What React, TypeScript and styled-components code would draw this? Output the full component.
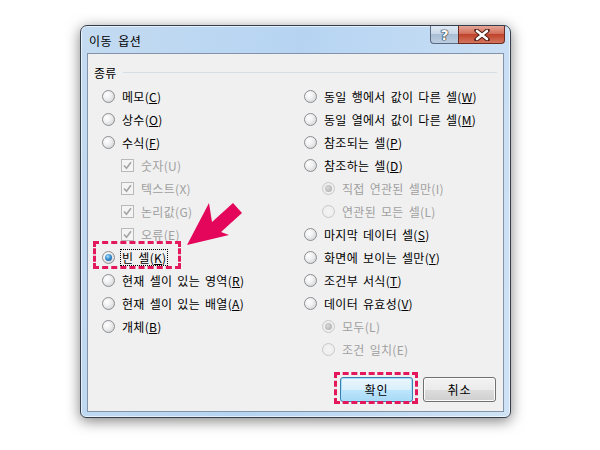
import React from 'react';
import styled, { createGlobalStyle, css } from 'styled-components';

const GlobalStyle = createGlobalStyle`
  html, body {
    margin: 0;
    padding: 0;
    background: #ffffff;
  }
  body {
    font-family: "Noto Sans CJK KR", "Noto Sans", sans-serif;
    font-size: 12px;
    color: #000000;
  }
`;

const Page = styled.div`
  position: relative;
  width: 600px;
  height: 450px;
  box-sizing: border-box;
  padding: 25px 0 0 80px;
  overflow: hidden;
`;

const Window = styled.div`
  width: 431px;
  height: 393px;
  box-sizing: border-box;
  border: 1px solid #343e4c;
  border-radius: 7px 7px 6px 6px;
  background: linear-gradient(100deg, #c4dbf1 0%, #b6d4f2 45%, #cfe2f5 100%);
  box-shadow: 0 3px 14px rgba(0, 0, 0, 0.5), inset 0 0 0 1px rgba(255, 255, 255, 0.6);
  display: flex;
  flex-direction: column;
`;

const TitleBar = styled.div`
  height: 27px;
  display: flex;
  align-items: flex-start;
  justify-content: space-between;
  padding: 0 5px 0 8px;
`;

const TitleText = styled.div`
  font-size: 12px;
  line-height: 16px;
  margin-top: 7px;
  letter-spacing: 0.5px;
  word-spacing: 3px;
`;

const CaptionButtons = styled.div`
  display: flex;
`;

const CaptionBtn = styled.div<{ kind: 'help' | 'close' }>`
  height: 18px;
  box-sizing: border-box;
  display: flex;
  align-items: center;
  justify-content: center;
  border: 1px solid #5a6a80;
  border-top: none;
  ${({ kind }) =>
    kind === 'help'
      ? css`
          width: 28px;
          border-radius: 0 0 0 4px;
          border-right: none;
          background: linear-gradient(to bottom, #dfe9f4 0%, #c9d8e8 45%, #a9bdd3 50%, #bccde0 100%);
        `
      : css`
          width: 47px;
          border-radius: 0 0 4px 0;
          border-color: #6a2a22;
          background: linear-gradient(to bottom, #e6a697 0%, #d26f5a 45%, #c0432b 50%, #d3755e 100%);
        `}
`;

const HelpGlyph = styled.span`
  font-family: "DejaVu Sans", sans-serif;
  font-weight: bold;
  font-size: 14px;
  line-height: 14px;
  color: #ffffff;
  text-shadow: 0 0 1px #233040, 0 0 1px #233040, 0 0 1px #233040, 0 0 1px #233040;
`;

const Content = styled.div`
  flex: 1;
  margin: 0 6px 5px 6px;
  border: 1px solid #8393a8;
  background: #f0f0f0;
  display: flex;
  flex-direction: column;
`;

const GroupHeader = styled.div`
  display: flex;
  align-items: center;
  gap: 6px;
  margin: 10px 6px 0 6px;
  height: 16px;
  letter-spacing: 0.3px;
`;

const GroupLine = styled.div`
  flex: 1;
  height: 1px;
  background: #d5dfe5;
`;

const Columns = styled.div`
  display: grid;
  grid-template-columns: 202px 1fr;
  margin-top: 5px;
  padding-left: 14px;
`;

const Column = styled.div`
  display: flex;
  flex-direction: column;
`;

const Row = styled.div<{ indent?: number; disabled?: boolean }>`
  height: 23px;
  display: flex;
  align-items: center;
  gap: 5px;
  padding-left: ${({ indent }) => indent || 0}px;
  color: ${({ disabled }) => (disabled ? '#a0a0a0' : '#000000')};
  white-space: nowrap;
  line-height: 15px;
  letter-spacing: 0.3px;
  word-spacing: 2px;
`;

const Radio = styled.span<{ checked?: boolean; disabled?: boolean }>`
  width: 13px;
  height: 13px;
  box-sizing: border-box;
  border-radius: 50%;
  flex: none;
  display: flex;
  align-items: center;
  justify-content: center;
  border: 1px solid ${({ disabled }) => (disabled ? '#c8c8c8' : '#8c8e92')};
  background: ${({ disabled }) =>
    disabled
      ? 'radial-gradient(circle at 50% 50%, #f4f4f4 0%, #ebebeb 100%)'
      : 'radial-gradient(circle at 35% 35%, #ffffff 0%, #f0f0f0 40%, #c9cbce 100%)'};
  &::after {
    content: '';
    display: ${({ checked }) => (checked ? 'block' : 'none')};
    width: 7px;
    height: 7px;
    border-radius: 50%;
    background: ${({ disabled }) =>
      disabled
        ? 'radial-gradient(circle at 40% 40%, #d8d8d8 0%, #a8a8a8 100%)'
        : 'radial-gradient(circle at 40% 35%, #a9e2ff 0%, #3b8fd0 45%, #134f88 100%)'};
  }
`;

const CheckBox = styled.span`
  width: 13px;
  height: 13px;
  box-sizing: border-box;
  flex: none;
  border: 1px solid #b9b9b9;
  background: #f4f4f4;
  display: flex;
  align-items: center;
  justify-content: center;
`;

const Label = styled.span<{ focused?: boolean }>`
  padding: 0 1px;
  border: 1px solid transparent;
  ${({ focused }) =>
    focused &&
    css`
      border: 1px dotted #000000;
    `}
`;

const ButtonRow = styled.div`
  margin-top: auto;
  display: flex;
  justify-content: flex-end;
  gap: 10px;
  padding: 0 7px 9px 0;
`;

const Button = styled.div<{ primary?: boolean }>`
  width: 73px;
  height: 25px;
  box-sizing: border-box;
  border-radius: 3px;
  display: flex;
  align-items: center;
  justify-content: center;
  letter-spacing: 1px;
  border: 1px solid ${({ primary }) => (primary ? '#3c7fb1' : '#707070')};
  background: ${({ primary }) =>
    primary
      ? 'linear-gradient(to bottom, #eaf6fd 0%, #d9f0fc 50%, #bee6fd 50%, #a7d9f5 100%)'
      : 'linear-gradient(to bottom, #f2f2f2 0%, #ebebeb 50%, #dddddd 50%, #cfcfcf 100%)'};
  box-shadow: inset 0 0 0 1px ${({ primary }) => (primary ? '#a6e0fb' : '#fbfbfb')};
`;

const Highlight = styled.div`
  position: absolute;
  box-sizing: border-box;
  border: 3px dashed #e3185c;
`;

const ArrowSvg = styled.svg`
  position: absolute;
  left: 0;
  top: 0;
  pointer-events: none;
`;

type Item = {
  text: string;
  key: string;
  type: 'radio' | 'check';
  indent?: number;
  disabled?: boolean;
  checked?: boolean;
  focused?: boolean;
};

const leftItems: Item[] = [
  { text: '메모', key: 'C', type: 'radio' },
  { text: '상수', key: 'O', type: 'radio' },
  { text: '수식', key: 'F', type: 'radio' },
  { text: '숫자', key: 'U', type: 'check', indent: 19, disabled: true },
  { text: '텍스트', key: 'X', type: 'check', indent: 19, disabled: true },
  { text: '논리값', key: 'G', type: 'check', indent: 19, disabled: true },
  { text: '오류', key: 'E', type: 'check', indent: 19, disabled: true },
  { text: '빈 셀', key: 'K', type: 'radio', checked: true, focused: true },
  { text: '현재 셀이 있는 영역', key: 'R', type: 'radio' },
  { text: '현재 셀이 있는 배열', key: 'A', type: 'radio' },
  { text: '개체', key: 'B', type: 'radio' },
];

const rightItems: Item[] = [
  { text: '동일 행에서 값이 다른 셀', key: 'W', type: 'radio' },
  { text: '동일 열에서 값이 다른 셀', key: 'M', type: 'radio' },
  { text: '참조되는 셀', key: 'P', type: 'radio' },
  { text: '참조하는 셀', key: 'D', type: 'radio' },
  { text: '직접 연관된 셀만', key: 'I', type: 'radio', indent: 18, disabled: true, checked: true },
  { text: '연관된 모든 셀', key: 'L', type: 'radio', indent: 18, disabled: true },
  { text: '마지막 데이터 셀', key: 'S', type: 'radio' },
  { text: '화면에 보이는 셀만', key: 'Y', type: 'radio' },
  { text: '조건부 서식', key: 'T', type: 'radio' },
  { text: '데이터 유효성', key: 'V', type: 'radio' },
  { text: '모두', key: 'L', type: 'radio', indent: 18, disabled: true, checked: true },
  { text: '조건 일치', key: 'E', type: 'radio', indent: 18, disabled: true },
];

const CheckMark = () => (
  <svg width="9" height="9" viewBox="0 0 9 9">
    <path d="M1 4.5 L3.5 7.2 L8 1.2" fill="none" stroke="#a4a4a4" strokeWidth="1.6" />
  </svg>
);

const CloseGlyph = () => (
  <svg width="16" height="12" viewBox="0 0 16 12">
    <path d="M2.5 1.5 L13.5 10.5 M13.5 1.5 L2.5 10.5" stroke="#4a1a14" strokeWidth="4.4" strokeLinecap="round" />
    <path d="M3 2 L13 10 M13 2 L3 10" stroke="#ffffff" strokeWidth="2.6" strokeLinecap="round" />
  </svg>
);

const OptionRow = ({ item }: { item: Item }) => (
  <Row indent={item.indent} disabled={item.disabled}>
    {item.type === 'radio' ? (
      <Radio checked={item.checked} disabled={item.disabled} />
    ) : (
      <CheckBox>
        <CheckMark />
      </CheckBox>
    )}
    <Label focused={item.focused}>
      {item.text}(
      {item.disabled ? item.key : <u>{item.key}</u>})
    </Label>
  </Row>
);

const App: React.FC = () => {
  return (
    <Page>
      <GlobalStyle />
      <Window>
        <TitleBar>
          <TitleText>이동 옵션</TitleText>
          <CaptionButtons>
            <CaptionBtn kind="help">
              <HelpGlyph>?</HelpGlyph>
            </CaptionBtn>
            <CaptionBtn kind="close">
              <CloseGlyph />
            </CaptionBtn>
          </CaptionButtons>
        </TitleBar>
        <Content>
          <GroupHeader>
            종류
            <GroupLine />
          </GroupHeader>
          <Columns>
            <Column>
              {leftItems.map((item, i) => (
                <OptionRow key={i} item={item} />
              ))}
            </Column>
            <Column>
              {rightItems.map((item, i) => (
                <OptionRow key={i} item={item} />
              ))}
            </Column>
          </Columns>
          <ButtonRow>
            <Button primary>확인</Button>
            <Button>취소</Button>
          </ButtonRow>
        </Content>
      </Window>
      <Highlight style={{ left: 93, top: 241, width: 88, height: 28 }} />
      <Highlight style={{ left: 334, top: 372, width: 84, height: 32 }} />
      <ArrowSvg width="600" height="450" viewBox="0 0 600 450">
        <polygon
          points="187,245 209,203 212,222 233,203 242,213 221,232 229,235"
          fill="#e4065a"
        />
      </ArrowSvg>
    </Page>
  );
};

export default App;
